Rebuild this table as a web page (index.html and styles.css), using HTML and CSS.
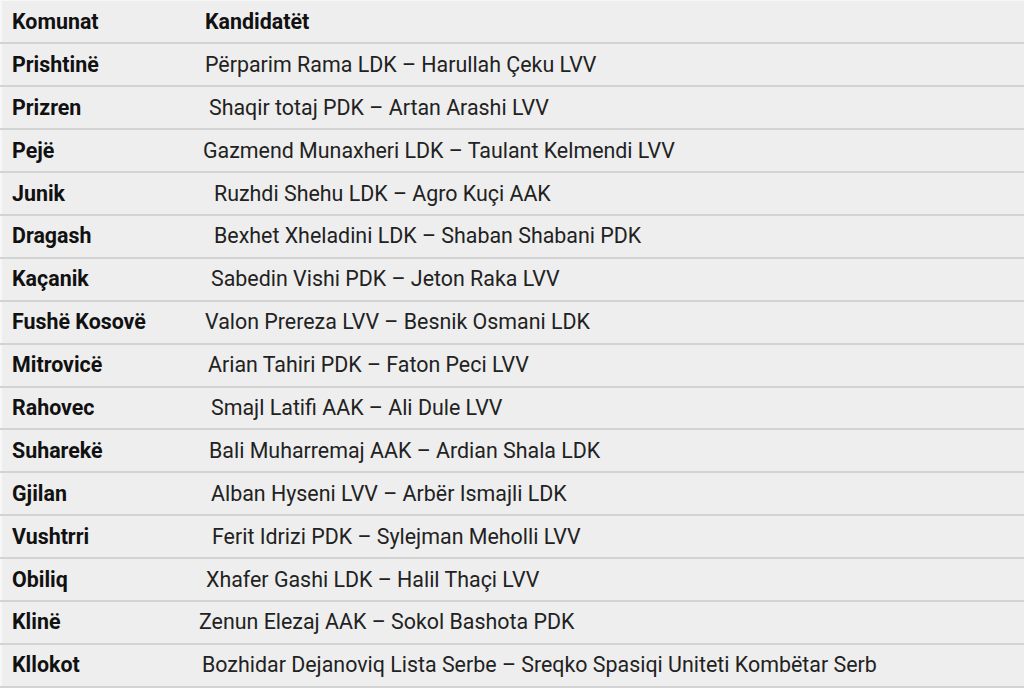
FILE: index.html
```html
<!DOCTYPE html>
<html lang="sq">
<head>
<meta charset="utf-8">
<title>Komunat dhe kandidatët</title>
<link rel="stylesheet" href="styles.css">
</head>
<body>
<table class="results">
  <thead>
    <tr><th class="muni">Komunat</th><th class="cand"><span class="in6">Kandidatët</span></th></tr>
  </thead>
  <tbody>
    <tr><td class="muni">Prishtinë</td><td class="cand"><span class="in6">Përparim Rama LDK – Harullah Çeku LVV</span></td></tr>
    <tr><td class="muni">Prizren</td><td class="cand"><span class="in10">Shaqir totaj PDK – Artan Arashi LVV</span></td></tr>
    <tr><td class="muni">Pejë</td><td class="cand"><span class="in4">Gazmend Munaxheri LDK – Taulant Kelmendi LVV</span></td></tr>
    <tr><td class="muni">Junik</td><td class="cand"><span class="in15">Ruzhdi Shehu LDK – Agro Kuçi AAK</span></td></tr>
    <tr><td class="muni">Dragash</td><td class="cand"><span class="in15">Bexhet Xheladini LDK – Shaban Shabani PDK</span></td></tr>
    <tr><td class="muni">Kaçanik</td><td class="cand"><span class="in12">Sabedin Vishi PDK – Jeton Raka LVV</span></td></tr>
    <tr><td class="muni">Fushë Kosovë</td><td class="cand"><span class="in6">Valon Prereza LVV – Besnik Osmani LDK</span></td></tr>
    <tr><td class="muni">Mitrovicë</td><td class="cand"><span class="in9">Arian Tahiri PDK – Faton Peci LVV</span></td></tr>
    <tr><td class="muni">Rahovec</td><td class="cand"><span class="in12">Smajl Latifi AAK – Ali Dule LVV</span></td></tr>
    <tr><td class="muni">Suharekë</td><td class="cand"><span class="in10">Bali Muharremaj AAK – Ardian Shala LDK</span></td></tr>
    <tr><td class="muni">Gjilan</td><td class="cand"><span class="in12">Alban Hyseni LVV – Arbër Ismajli LDK</span></td></tr>
    <tr><td class="muni">Vushtrri</td><td class="cand"><span class="in13">Ferit Idrizi PDK – Sylejman Meholli LVV</span></td></tr>
    <tr><td class="muni">Obiliq</td><td class="cand"><span class="in7">Xhafer Gashi LDK – Halil Thaçi LVV</span></td></tr>
    <tr><td class="muni">Klinë</td><td class="cand"><span class="in0">Zenun Elezaj AAK – Sokol Bashota PDK</span></td></tr>
    <tr><td class="muni">Kllokot</td><td class="cand"><span class="in3">Bozhidar Dejanoviq Lista Serbe – Sreqko Spasiqi Uniteti Kombëtar Serb</span></td></tr>
  </tbody>
</table>
</body>
</html>
```

FILE: styles.css
```css
html, body {
  margin: 0;
  padding: 0;
  background: #eeeeee;
}

body {
  font-family: Roboto, "Liberation Sans", Arial, sans-serif;
  font-size: 21.4px;
  color: #222222;
}

.results {
  width: 1026px;
  border-collapse: collapse;
  table-layout: fixed;
  background: #eeeeee;
  border-top: 1px solid #f7f7f7;
  border-left: 2px solid #f7f7f7;
}

.results th,
.results td {
  height: 42.9px;
  box-sizing: border-box;
  padding: 0;
  border-bottom: 2px solid #d3d3d3;
  text-align: left;
  vertical-align: middle;
  white-space: nowrap;
  line-height: 24px;
}

.muni {
  width: 198px;
  padding-left: 10px !important;
  font-weight: 700;
  color: #111111;
}

.cand {
  font-weight: 400;
}

.results th.cand {
  font-weight: 700;
  color: #111111;
}

.cand span { display: inline-block; }
.in0 { padding-left: 0; }
.in3 { padding-left: 3px; }
.in4 { padding-left: 4px; }
.in6 { padding-left: 6px; }
.in7 { padding-left: 7px; }
.in9 { padding-left: 9px; }
.in10 { padding-left: 10px; }
.in12 { padding-left: 12px; }
.in13 { padding-left: 13px; }
.in15 { padding-left: 15px; }
```
